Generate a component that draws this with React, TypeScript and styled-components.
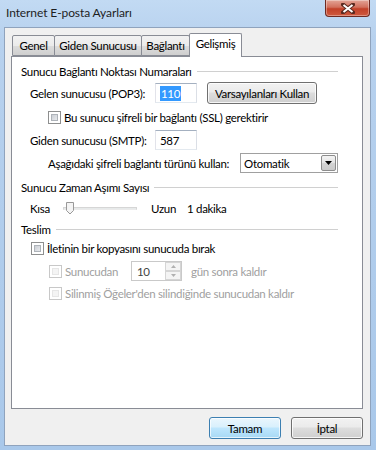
import { FC } from 'react'
import styled, { createGlobalStyle } from 'styled-components'

const GlobalStyle = createGlobalStyle`
  html, body {
    margin: 0;
    padding: 0;
    width: 376px;
    height: 450px;
    overflow: hidden;
  }
  body {
    font-family: Lato, 'Noto Sans', sans-serif;
    font-size: 11.5px;
    letter-spacing: -0.3px;
    color: #000;
    white-space: nowrap;
  }
`

const Window = styled.div`
  width: 376px;
  height: 450px;
  display: flex;
  flex-direction: column;
  background: linear-gradient(180deg, #c2daf3 0%, #b7d1ee 40px, #a9c8ea 100%);
  box-sizing: border-box;
`

const TitleBar = styled.div`
  height: 27px;
  display: flex;
  align-items: flex-start;
  padding-left: 6px;
  padding-right: 6px;
  flex-shrink: 0;
`

const Title = styled.div`
  line-height: 26px;
  font-size: 12px;
  letter-spacing: -0.1px;
  color: #1e1e1e;
`

const CloseButton = styled.div`
  margin-left: auto;
  width: 45px;
  height: 17px;
  box-sizing: border-box;
  border: 1px solid #6e2a22;
  border-top: none;
  border-radius: 0 0 4px 4px;
  background: linear-gradient(180deg, #e3a597 0%, #d2705d 45%, #c24129 55%, #cf5a3f 100%);
  display: flex;
  align-items: center;
  justify-content: center;
  box-shadow: inset 0 0 0 1px rgba(255, 255, 255, 0.35);
`

const Client = styled.div`
  flex: 1;
  margin: 0 5px 4px 4px;
  background: #f0f0f0;
  border: 1px solid #8fa3bd;
  display: flex;
  flex-direction: column;
  padding: 5px 7px 0 6px;
`

const TabRow = styled.div`
  display: flex;
  align-items: flex-end;
  height: 23px;
  padding-left: 1px;
  position: relative;
  z-index: 1;
`

const Tab = styled.div<{ active?: boolean; w: number }>`
  width: ${(p) => p.w}px;
  height: ${(p) => (p.active ? 24 : 21)}px;
  box-sizing: border-box;
  border: 1px solid #898c95;
  border-bottom: ${(p) => (p.active ? 'none' : '1px solid #898c95')};
  margin-right: -1px;
  margin-bottom: ${(p) => (p.active ? '-1px' : '0')};
  background: ${(p) =>
    p.active ? '#fff' : 'linear-gradient(180deg, #f2f2f2 0%, #ebebeb 50%, #dddddd 51%, #cfcfcf 100%)'};
  border-radius: 2px 2px 0 0;
  display: flex;
  align-items: ${(p) => (p.active ? 'flex-start' : 'center')};
  padding-top: ${(p) => (p.active ? '3px' : '0')};
  justify-content: center;
`

const Panel = styled.div`
  height: 353px;
  box-sizing: border-box;
  background: #fff;
  border: 1px solid #898c95;
  padding: 6px 24px 0 9px;
  display: flex;
  flex-direction: column;
`

const SectionHeader = styled.div<{ mt: number }>`
  display: flex;
  align-items: center;
  height: 14px;
  margin-top: ${(p) => p.mt}px;

  &::after {
    content: '';
    flex: 1;
    height: 1px;
    background: #d0d0d0;
    margin-left: 5px;
    margin-top: 1px;
  }
`

const Row = styled.div<{ mt: number; h: number; indent: number }>`
  display: flex;
  align-items: center;
  margin-top: ${(p) => p.mt}px;
  height: ${(p) => p.h}px;
  padding-left: ${(p) => p.indent}px;
`

const Label = styled.span<{ w?: number; disabled?: boolean }>`
  width: ${(p) => (p.w ? `${p.w}px` : 'auto')};
  flex-shrink: 0;
  color: ${(p) => (p.disabled ? '#a0a0a0' : '#000')};
`

const TextBox = styled.div<{ w: number }>`
  width: ${(p) => p.w}px;
  height: 20px;
  box-sizing: border-box;
  border: 1px solid #abadb3;
  border-top-color: #a4b0c0;
  border-left-color: #e2e3ea;
  border-right-color: #dbdfe6;
  border-bottom-color: #e3e9ef;
  background: #fff;
  display: flex;
  align-items: center;
  padding-left: 4px;
`

const Selected = styled.span`
  background: #3399ff;
  color: #fff;
  padding: 0 1px;
  line-height: 15px;
`

const PushButton = styled.div<{ w: number; primary?: boolean }>`
  width: ${(p) => p.w}px;
  height: 22px;
  box-sizing: border-box;
  border: 1px solid ${(p) => (p.primary ? '#3c7fb1' : '#707070')};
  border-radius: 3px;
  background: ${(p) =>
    p.primary
      ? 'linear-gradient(180deg, #eaf6fd 0%, #d9f0fc 45%, #bee6fd 50%, #a7d9f5 100%)'
      : 'linear-gradient(180deg, #f2f2f2 0%, #ebebeb 45%, #dddddd 50%, #cfcfcf 100%)'};
  box-shadow: inset 0 0 0 1px ${(p) => (p.primary ? 'rgba(255,255,255,0.7)' : 'rgba(255,255,255,0.8)')};
  display: flex;
  align-items: center;
  justify-content: center;
  flex-shrink: 0;
`

const CheckBox = styled.div<{ disabled?: boolean }>`
  width: 13px;
  height: 13px;
  box-sizing: border-box;
  border: 1px solid ${(p) => (p.disabled ? '#c8c8c8' : '#8e8f8f')};
  background: #fff;
  padding: 2px;
  margin-right: 3px;
  flex-shrink: 0;

  &::before {
    content: '';
    display: block;
    width: 100%;
    height: 100%;
    box-sizing: border-box;
    border: 1px solid ${(p) => (p.disabled ? '#e6e6e6' : '#aeb3b9')};
    background: ${(p) =>
      p.disabled ? '#f4f4f4' : 'linear-gradient(135deg, #cbcfd5 0%, #e7e9ec 100%)'};
  }
`

const Combo = styled.div`
  width: 98px;
  height: 20px;
  box-sizing: border-box;
  border: 1px solid #a0a0a0;
  background: #fff;
  display: flex;
  align-items: center;
  padding-left: 3px;
  flex-shrink: 0;
`

const ComboArrow = styled.div`
  margin-left: auto;
  margin-right: 1px;
  width: 15px;
  height: 16px;
  box-sizing: border-box;
  border: 1px solid #8d8d8d;
  border-radius: 2px;
  background: linear-gradient(180deg, #f4f4f4 0%, #e4e4e4 50%, #d4d4d4 51%, #cbcbcb 100%);
  display: flex;
  align-items: center;
  justify-content: center;
`

const Track = styled.div`
  width: 74px;
  height: 14px;
  position: relative;
  display: flex;
  align-items: center;
  flex-shrink: 0;

  &::before {
    content: '';
    width: 100%;
    height: 3px;
    box-sizing: border-box;
    border: 1px solid #d6d6d6;
    border-bottom-color: #ebebeb;
    background: #e7eaea;
  }
`

const Thumb = styled.svg`
  position: absolute;
  left: 2px;
  top: 1px;
`

const SpinBox = styled.div`
  width: 51px;
  height: 20px;
  box-sizing: border-box;
  border: 1px solid #c9c9c9;
  background: #fff;
  display: flex;
  align-items: center;
  padding-left: 5px;
  color: #444;
  flex-shrink: 0;
`

const SpinButtons = styled.div`
  margin-left: auto;
  width: 16px;
  height: 18px;
  display: flex;
  flex-direction: column;
`

const SpinHalf = styled.div`
  flex: 1;
  box-sizing: border-box;
  border: 1px solid #d5d5d5;
  background: #f4f4f4;
  display: flex;
  align-items: center;
  justify-content: center;
`

const ButtonRow = styled.div`
  display: flex;
  justify-content: flex-end;
  gap: 10px;
  padding-top: 8px;
`

const App: FC = () => {
  return (
    <>
      <GlobalStyle />
      <Window>
        <TitleBar>
          <Title>Internet E-posta Ayarları</Title>
          <CloseButton>
            <svg width="14" height="11" viewBox="0 0 14 11">
              <path d="M2 1.5 L12 9.5 M12 1.5 L2 9.5" stroke="#5a2a20" strokeWidth="4" strokeLinecap="square" />
              <path d="M2.5 2 L11.5 9 M11.5 2 L2.5 9" stroke="#fff" strokeWidth="2" />
            </svg>
          </CloseButton>
        </TitleBar>
        <Client>
          <TabRow>
            <Tab w={43}>Genel</Tab>
            <Tab w={88}>Giden Sunucusu</Tab>
            <Tab w={49}>Bağlantı</Tab>
            <Tab w={53} active>
              Gelişmiş
            </Tab>
          </TabRow>
          <Panel>
            <SectionHeader mt={1}>Sunucu Bağlantı Noktası Numaraları</SectionHeader>
            <Row mt={3} h={24} indent={9}>
              <Label w={125}>Gelen sunucusu (POP3):</Label>
              <TextBox w={42}>
                <Selected>110</Selected>
              </TextBox>
              <span style={{ width: 10 }} />
              <PushButton w={110}>Varsayılanları Kullan</PushButton>
            </Row>
            <Row mt={0} h={24} indent={27}>
              <CheckBox />
              <Label>Bu sunucu şifreli bir bağlantı (SSL) gerektirir</Label>
            </Row>
            <Row mt={0} h={22} indent={9}>
              <Label w={125}>Giden sunucusu (SMTP):</Label>
              <TextBox w={42}>587</TextBox>
            </Row>
            <Row mt={1} h={22} indent={27}>
              <Label w={192}>Aşağıdaki şifreli bağlantı türünü kullan:</Label>
              <Combo>
                Otomatik
                <ComboArrow>
                  <svg width="7" height="4" viewBox="0 0 7 4">
                    <path d="M0 0 H7 L3.5 4 Z" fill="#000" />
                  </svg>
                </ComboArrow>
              </Combo>
            </Row>
            <SectionHeader mt={6}>Sunucu Zaman Aşımı Sayısı</SectionHeader>
            <Row mt={6} h={16} indent={9}>
              <Label w={33}>Kısa</Label>
              <Track>
                <Thumb width="10" height="13" viewBox="0 0 10 13">
                  <path d="M1.5 0.5 H8.5 V8.5 L5 12 L1.5 8.5 Z" fill="#f4f4f4" stroke="#999" />
                </Thumb>
              </Track>
              <Label w={36} style={{ marginLeft: 14 }}>
                Uzun
              </Label>
              <Label>1 dakika</Label>
            </Row>
            <SectionHeader mt={6}>Teslim</SectionHeader>
            <Row mt={3} h={18} indent={10}>
              <CheckBox />
              <Label>İletinin bir kopyasını sunucuda bırak</Label>
            </Row>
            <Row mt={3} h={22} indent={28}>
              <CheckBox disabled />
              <Label w={66} disabled>
                Sunucudan
              </Label>
              <SpinBox>
                10
                <SpinButtons>
                  <SpinHalf>
                    <svg width="5" height="3" viewBox="0 0 5 3">
                      <path d="M0 3 H5 L2.5 0 Z" fill="#b0b0b0" />
                    </svg>
                  </SpinHalf>
                  <SpinHalf>
                    <svg width="5" height="3" viewBox="0 0 5 3">
                      <path d="M0 0 H5 L2.5 3 Z" fill="#b0b0b0" />
                    </svg>
                  </SpinHalf>
                </SpinButtons>
              </SpinBox>
              <Label disabled style={{ marginLeft: 9 }}>
                gün sonra kaldır
              </Label>
            </Row>
            <Row mt={2} h={18} indent={28}>
              <CheckBox disabled />
              <Label disabled>Silinmiş Öğeler'den silindiğinde sunucudan kaldır</Label>
            </Row>
          </Panel>
          <ButtonRow>
            <PushButton w={72} primary>
              Tamam
            </PushButton>
            <PushButton w={72}>İptal</PushButton>
          </ButtonRow>
        </Client>
      </Window>
    </>
  )
}

export default App
